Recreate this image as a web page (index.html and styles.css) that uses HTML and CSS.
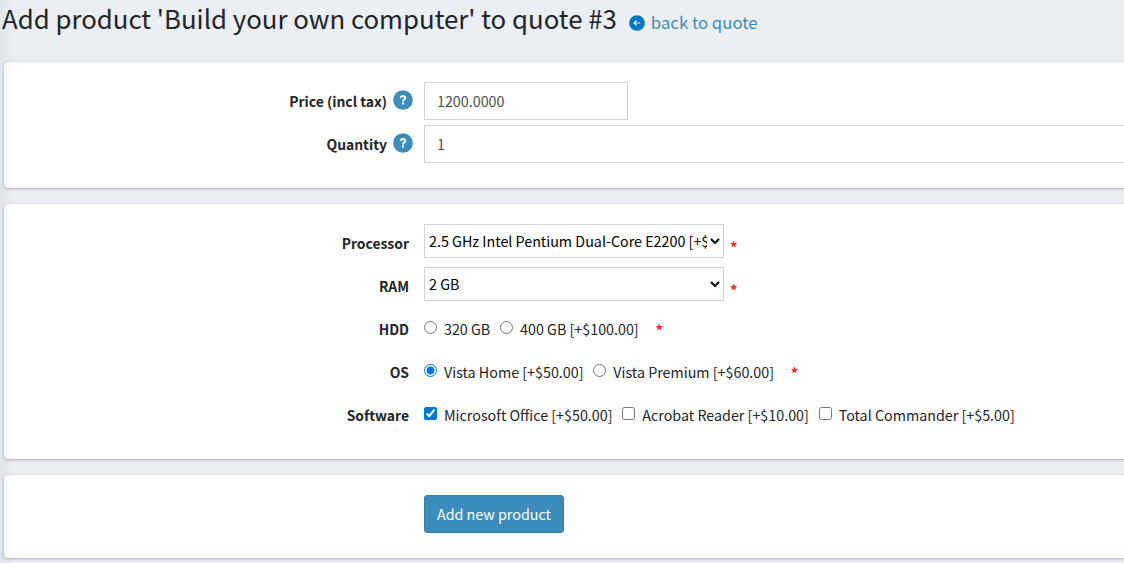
FILE: index.html
```html
<!DOCTYPE html>
<html lang="en">
<head>
<meta charset="utf-8">
<title>Add product to quote</title>
<link rel="stylesheet" href="styles.css">
</head>
<body>
<div class="sidebar-shadow"></div>
<header class="page-header">
  <h1 class="title">Add product 'Build your own computer' to quote #3</h1>
  <a class="back" href="#">
    <svg class="back-icon" viewBox="0 0 16 16"><circle cx="8" cy="8" r="7.8" fill="#0077be"/><path d="M11.3 8H5.2M7.6 5.4 5 8l2.6 2.6" fill="none" stroke="#fff" stroke-width="1.2"/></svg>
    <span>back to quote</span>
  </a>
</header>
<form>
  <section class="card card-price">
    <div class="row">
      <label class="label">Price (incl tax)<svg class="help" viewBox="0 0 20 20"><circle cx="10" cy="10" r="9.8" fill="#3c8dbc"/><path d="M7.7 7.9C7.8 5.3 12.3 5.3 12.2 7.9 12.1 9.5 10 9.4 10 11.4M10 12.6v2" fill="none" stroke="#fff" stroke-width="2"/></svg></label>
      <input class="text-input short" type="text" value="1200.0000">
    </div>
    <div class="row">
      <label class="label">Quantity<svg class="help" viewBox="0 0 20 20"><circle cx="10" cy="10" r="9.8" fill="#3c8dbc"/><path d="M7.7 7.9C7.8 5.3 12.3 5.3 12.2 7.9 12.1 9.5 10 9.4 10 11.4M10 12.6v2" fill="none" stroke="#fff" stroke-width="2"/></svg></label>
      <input class="text-input" type="text" value="1">
    </div>
  </section>
  <section class="card card-options">
    <div class="row">
      <label class="label">Processor</label>
      <select class="select"><option>2.5 GHz Intel Pentium Dual-Core E2200 [+$15.00]</option></select>
      <span class="required low">*</span>
    </div>
    <div class="row">
      <label class="label">RAM</label>
      <select class="select"><option>2 GB</option></select>
      <span class="required low">*</span>
    </div>
    <div class="row">
      <span class="label">HDD</span>
      <label class="option"><input type="radio" name="hdd"><span>320 GB</span></label>
      <label class="option"><input type="radio" name="hdd"><span>400 GB [+$100.00]</span></label>
      <span class="required">*</span>
    </div>
    <div class="row">
      <span class="label">OS</span>
      <label class="option"><input type="radio" name="os" checked><span>Vista Home [+$50.00]</span></label>
      <label class="option"><input type="radio" name="os"><span>Vista Premium [+$60.00]</span></label>
      <span class="required">*</span>
    </div>
    <div class="row">
      <span class="label">Software</span>
      <label class="option"><input type="checkbox" checked><span>Microsoft Office [+$50.00]</span></label>
      <label class="option"><input type="checkbox"><span>Acrobat Reader [+$10.00]</span></label>
      <label class="option"><input type="checkbox"><span>Total Commander [+$5.00]</span></label>
    </div>
  </section>
  <section class="card card-submit">
    <button class="submit" type="button">Add new product</button>
  </section>
</form>
</body>
</html>
```
FILE: styles.css
```css
* { box-sizing: border-box; }
body {
  margin: 0;
  height: 563px;
  overflow: hidden;
  background: #ebeef3;
  color: #212529;
  font-family: "Noto Sans CJK SC", "Noto Sans", sans-serif;
  font-size: 14.3px;
  line-height: 20px;
}
.sidebar-shadow {
  position: absolute;
  z-index: 2;
  left: 0;
  top: 0;
  width: 16px;
  height: 563px;
  background: linear-gradient(to right, rgba(0, 0, 0, .045), rgba(0, 0, 0, 0));
}
.page-header { display: flex; height: 62px; padding-left: 2px; white-space: nowrap; }
.title { margin: 0; font-size: 25.8px; font-weight: 400; line-height: 36px; }
.back { display: flex; gap: 6px; margin: 0 0 0 12px; color: #3c8dbc; font-size: 16.75px; line-height: 44px; text-decoration: none; }
.back-icon { width: 16px; height: 16px; margin-top: 15px; }
.card {
  width: 1140px;
  margin: 0 0 16px 4px;
  padding-top: 20px;
  background: #fff;
  border-radius: 4px;
  box-shadow: 0 0 1px rgba(0, 0, 0, .125), 0 1px 3px rgba(0, 0, 0, .25);
}
.card-price { height: 126px; }
.card-options { height: 255px; }
.card-submit { height: 83px; padding-left: 420px; }
.row { display: flex; height: 43px; white-space: nowrap; }
.label { display: flex; justify-content: flex-end; flex: none; width: 405px; margin-right: 15px; padding-top: 9px; font-size: 13.9px; font-weight: 700; }
.card-price .label { width: 409px; margin-right: 11px; }
.help { width: 20px; height: 20px; margin: -1px 0 0 6px; }
.text-input { width: 720px; height: 38px; padding: 0 12px 2px; border: 1px solid #ced4da; font: inherit; color: #495057; background: #fff; }
.short { width: 204px; }
.select { width: 300px; height: 34px; padding-bottom: 2px; border: 1px solid #ced4da; border-radius: 0; background: #fff; color: #000; font: inherit; }
.required { margin: 10px 0 0 7px; color: #f22; font-size: 14.6px; font-weight: 700; }
.low { margin: 13px 0 0 6px; }
.option { display: flex; margin-right: 9.8px; padding-top: 9px; }
.option input { width: 13px; height: 13px; margin: 2px 7px 0 0; accent-color: #0078d7; }
.submit { width: 140px; height: 38px; padding: 0; border: 1px solid #367fa9; border-radius: 3px; background: #3c8dbc; color: #fff; font: inherit; }
```
